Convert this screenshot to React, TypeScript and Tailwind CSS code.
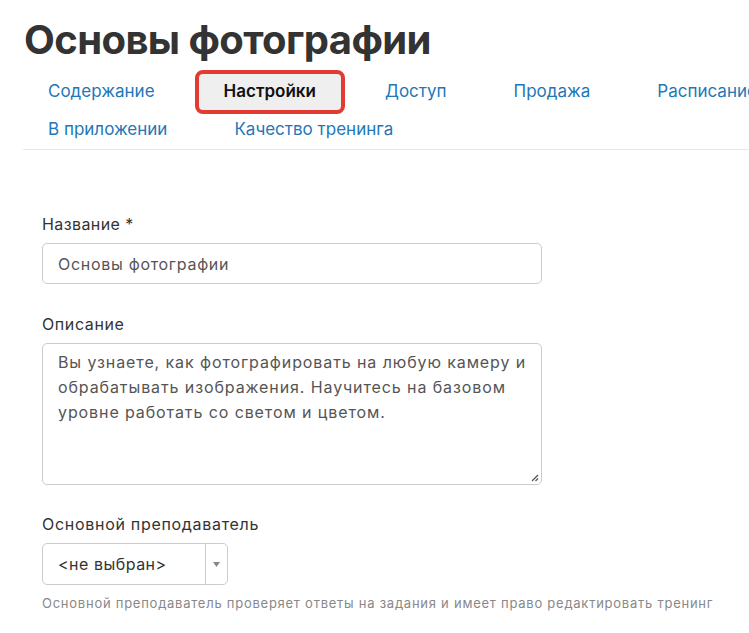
import React from "react";

const tabsRow = [
  { label: "Содержание" },
  { label: "Настройки", active: true },
  { label: "Доступ" },
  { label: "Продажа" },
  { label: "Расписание" },
  { label: "В приложении" },
  { label: "Качество тренинга" },
];

export default function App() {
  return (
    <div
      className="w-[749px] h-[633px] overflow-hidden bg-white text-[#333]"
      style={{ fontFamily: "Inter, 'Noto Sans', sans-serif" }}
    >
      <div className="pl-[23px] w-[1000px]">
        <h1 className="pt-[18px] pl-[1px] text-[40px] leading-[44px] font-bold tracking-[-0.6px] text-[#333]">
          Основы фотографии
        </h1>
        <div className="mt-[11px] w-[800px] flex flex-wrap gap-x-[17px]">
          {tabsRow.map((t) =>
            t.active ? (
              <div
                key={t.label}
                className="relative h-[38px] px-[27px] flex items-center bg-[#efefef] rounded-[6px] text-[17px] font-semibold text-[#111]"
              >
                {t.label}
                <div className="absolute -inset-x-[2px] -top-[3px] -bottom-[3px] border-[4px] border-[#e33b32] rounded-[8px]" />
              </div>
            ) : (
              <div
                key={t.label}
                className="h-[38px] px-[25px] flex items-center text-[17px] text-[#2277b8]"
              >
                {t.label}
              </div>
            )
          )}
        </div>
        <div className="h-px bg-[#e8e8e8] w-[760px]" />
      </div>

      <div className="pl-[42px] pt-[63px] w-[500px]">
        <label className="block text-[16px] leading-[22px] tracking-[0.4px] text-[#333]">Название *</label>
        <input
          readOnly
          value="Основы фотографии"
          className="mt-[8px] block w-[500px] h-[41px] px-[15px] border border-[#ccc] rounded-[5px] text-[16px] tracking-[0.7px] text-[#555] outline-none"
          style={{ fontFamily: "Inter, 'Noto Sans', sans-serif" }}
        />

        <label className="block mt-[29px] text-[16px] leading-[22px] tracking-[0.6px] text-[#333]">Описание</label>
        <div className="relative mt-[8px] w-[500px] h-[142px] border border-[#ccc] rounded-[5px] px-[15px] pt-[6px] text-[16px] leading-[25px] tracking-[0.9px] text-[#555] whitespace-nowrap">
          <div>Вы узнаете, как фотографировать на любую камеру и</div>
          <div>обрабатывать изображения. Научитесь на базовом</div>
          <div>уровне работать со светом и цветом.</div>
          <svg className="absolute right-[2px] bottom-[2px]" width="9" height="9" viewBox="0 0 9 9">
            <line x1="8" y1="2" x2="2" y2="8" stroke="#555" strokeWidth="1.2" />
            <line x1="8" y1="5.5" x2="5.5" y2="8" stroke="#555" strokeWidth="1.2" />
          </svg>
        </div>

        <label className="block mt-[28px] text-[16px] leading-[22px] tracking-[0.7px] text-[#333] whitespace-nowrap">
          Основной преподаватель
        </label>
        <div className="mt-[8px] flex w-[186px] h-[42px] border border-[#ccc] rounded-[5px]">
          <div className="flex-1 flex items-center pl-[15px] text-[16px] tracking-[0.5px] text-[#333]">&lt;не выбран&gt;</div>
          <div className="w-[22px] border-l border-[#ccc] flex items-center justify-center">
            <svg width="7" height="5" viewBox="0 0 7 5">
              <path d="M0 0 L7 0 L3.5 5 Z" fill="#888" />
            </svg>
          </div>
        </div>
        <div className="mt-[9px] text-[13px] leading-[18px] tracking-[0.75px] text-[#888] whitespace-nowrap">
          Основной преподаватель проверяет ответы на задания и имеет право редактировать тренинг
        </div>
      </div>
    </div>
  );
}
